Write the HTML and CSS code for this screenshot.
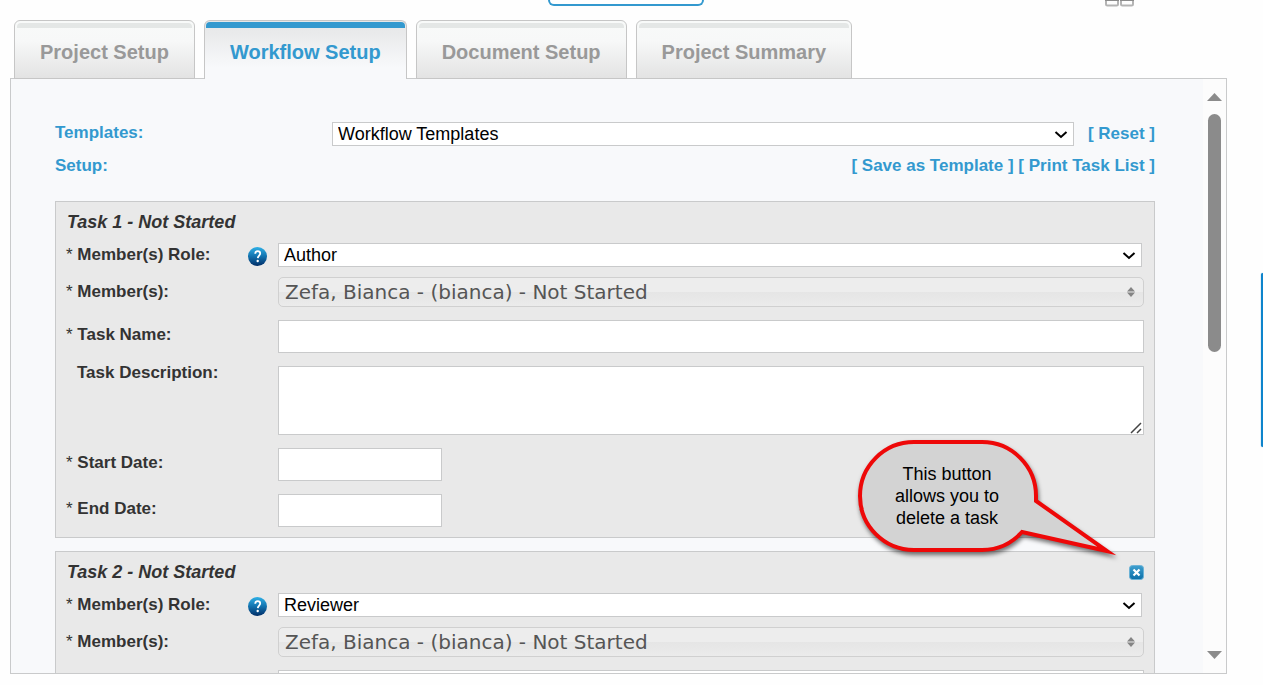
FILE: index.html
```html
<!DOCTYPE html>
<html lang="en">
<head>
<meta charset="utf-8">
<title>Workflow Setup</title>
<link rel="stylesheet" href="styles.css">
</head>
<body>
<svg class="defs" aria-hidden="true">
  <defs>
    <linearGradient id="help-fill" x1="0" y1="0" x2="0" y2="1">
      <stop offset="0" stop-color="#2fb0e6"/><stop offset="0.5" stop-color="#1272ae"/><stop offset="1" stop-color="#002c66"/>
    </linearGradient>
    <linearGradient id="close-fill" x1="0" y1="0" x2="0" y2="1">
      <stop offset="0" stop-color="#3fa0cf"/><stop offset="1" stop-color="#0c6fa8"/>
    </linearGradient>
    <symbol id="chevron" viewBox="0 0 14 9"><path d="M1.500 2l5.500 5 5.500-5" fill="none" stroke="#000" stroke-width="2"/></symbol>
    <symbol id="sort" viewBox="0 0 8 10"><path d="M4 0l4 4.400H0zM4 10l4-4.400H0z" fill="#858585"/></symbol>
    <symbol id="help" viewBox="0 0 19 19">
      <circle cx="9.5" cy="9.5" r="9.5" fill="url(#help-fill)"/>
      <path d="M7.2 6.8C7.2 5 8.3 4.1 9.7 4.1s2.5 1 2.5 2.4c0 1.9-2.3 2.2-2.4 4.6" fill="none" stroke="#fff" stroke-width="1.8"/>
      <circle cx="9.7" cy="14" r="1.2" fill="#fff"/>
    </symbol>
  </defs>
</svg>
<header class="topbar">
  <button class="topbar-button" type="button" aria-label="Open"></button>
  <svg class="topbar-grid" width="29" height="7" viewBox="0 0 29 7" aria-hidden="true">
    <path d="M1 0v4q0 1.500 1.500 1.500h9q1.500 0 1.500-1.500V0M16 0v4q0 1.500 1.500 1.500h9q1.500 0 1.500-1.500V0" fill="none" stroke="#b4b4b4" stroke-width="2"/>
    <path d="M0 0h14v1H0zM15 0h14v1H15z" fill="#8c8c8c"/>
  </svg>
</header>
<nav class="tabs">
  <a class="tab" href="#project">Project Setup</a>
  <a class="tab tab-active" href="#workflow">Workflow Setup</a>
  <a class="tab" href="#document">Document Setup</a>
  <a class="tab" href="#summary">Project Summary</a>
</nav>
<main class="panel">
  <div class="content">
    <div class="template-row">
      <label class="heading" for="templates">Templates:</label>
      <span class="select">
        <select id="templates"><option>Workflow Templates</option></select>
        <svg class="chevron" width="14" height="9" aria-hidden="true"><use href="#chevron"/></svg>
      </span>
      <a class="link" href="#reset">[ Reset ]</a>
    </div>
    <div class="setup-row">
      <span class="heading">Setup:</span>
      <span><a class="link" href="#save">[ Save as Template ]</a> <a class="link" href="#print">[ Print Task List ]</a></span>
    </div>

    <section class="task">
      <div class="task-head"><h2>Task 1 - Not Started</h2></div>
      <div class="field">
        <div class="label-cell">
          <label for="role1"><span class="star">*</span> Member(s) Role:</label>
          <svg class="help" width="19" height="19" role="img" aria-label="Help"><use href="#help"/></svg>
        </div>
        <span class="select select-role">
          <select id="role1"><option>Author</option></select>
          <svg class="chevron" width="14" height="9" aria-hidden="true"><use href="#chevron"/></svg>
        </span>
      </div>
      <div class="field">
        <label for="members1"><span class="star">*</span> Member(s):</label>
        <button class="members" id="members1" type="button">Zefa, Bianca - (bianca) - Not Started <svg width="8" height="10" aria-hidden="true"><use href="#sort"/></svg></button>
      </div>
      <div class="field field-spaced">
        <label for="name1"><span class="star">*</span> Task Name:</label>
        <input class="text" id="name1" type="text">
      </div>
      <div class="field field-spaced field-top">
        <label class="optional" for="desc1">Task Description:</label>
        <span class="area-wrap">
          <textarea class="text area" id="desc1"></textarea>
          <svg class="grip" width="12" height="12" viewBox="0 0 12 12" aria-hidden="true"><path d="M1 11L11 1M7 11l4-4" fill="none" stroke="#444" stroke-width="1.500"/></svg>
        </span>
      </div>
      <div class="field field-spaced">
        <label for="start1"><span class="star">*</span> Start Date:</label>
        <input class="text date" id="start1" type="text">
      </div>
      <div class="field field-spaced">
        <label for="end1"><span class="star">*</span> End Date:</label>
        <input class="text date" id="end1" type="text">
      </div>
    </section>

    <section class="task">
      <div class="task-head">
        <h2>Task 2 - Not Started</h2>
        <button class="delete" type="button" aria-label="Delete task">
          <svg width="15" height="15" viewBox="0 0 15 15"><rect x="0.500" y="0.500" width="14" height="14" rx="3" fill="url(#close-fill)" stroke="#6bb2d6"/><path d="M4.500 4.500l6 6M10.500 4.500l-6 6" stroke="#fff" stroke-width="2.200"/></svg>
        </button>
      </div>
      <div class="field">
        <div class="label-cell">
          <label for="role2"><span class="star">*</span> Member(s) Role:</label>
          <svg class="help" width="19" height="19" role="img" aria-label="Help"><use href="#help"/></svg>
        </div>
        <span class="select select-role">
          <select id="role2"><option>Reviewer</option></select>
          <svg class="chevron" width="14" height="9" aria-hidden="true"><use href="#chevron"/></svg>
        </span>
      </div>
      <div class="field">
        <label for="members2"><span class="star">*</span> Member(s):</label>
        <button class="members" id="members2" type="button">Zefa, Bianca - (bianca) - Not Started <svg width="8" height="10" aria-hidden="true"><use href="#sort"/></svg></button>
      </div>
      <div class="field field-spaced">
        <span></span>
        <input class="text" type="text" aria-label="Task Name">
      </div>
      <aside class="callout">
        <svg class="callout-shape" width="275" height="133" viewBox="850 432 275 133" aria-hidden="true">
          <path d="M914 442H982A54 54 0 0 1 1036 496V501L1107 551 1022 532A54 54 0 0 1 982 550H914A54 54 0 0 1 914 442Z" fill="#d3d3d3" stroke="#ee0808" stroke-width="4" stroke-miterlimit="10"/>
        </svg>
        <p>This button<br>allows you to<br>delete a task</p>
      </aside>
    </section>
  </div>
  <div class="scrollbar" aria-hidden="true">
    <svg width="15" height="8" viewBox="0 0 15 8"><path d="M7.500 0L15 8H0z" fill="#8b8b8b"/></svg>
    <div class="track"><div class="thumb"></div></div>
    <svg width="15" height="8" viewBox="0 0 15 8"><path d="M7.500 8L15 0H0z" fill="#8b8b8b"/></svg>
  </div>
</main>
<div class="side-tab"></div>
</body>
</html>
```
FILE: styles.css
```css
* { box-sizing: border-box; }

body {
  margin: 0;
  height: 100vh;
  display: flex;
  flex-direction: column;
  overflow: hidden;
  background: #fefefe;
  color: #333;
  font: 18px/22px "Liberation Sans", Arial, sans-serif;
}

.defs { position: absolute; width: 0; height: 0; }

.topbar {
  flex: none;
  display: flex;
  justify-content: space-between;
  align-items: flex-start;
  height: 20px;
  padding: 0 129px 0 548px;
}
.topbar-button {
  width: 156px;
  height: 6px;
  padding: 0;
  border: 2px solid #3399cf;
  border-top: 0;
  border-radius: 0 0 6px 6px;
  background: #fff;
}

.tabs {
  flex: none;
  display: flex;
  gap: 9px;
  padding-left: 14px;
  margin-bottom: -1px;
  position: relative;
  z-index: 1;
}
.tab {
  position: relative;
  height: 59px;
  padding: 1px 25px 0;
  border: 1px solid #c6c6c6;
  border-radius: 6px 6px 0 0;
  background: linear-gradient(#f8faf9, #f7f8f8 35%, #e3e3e3);
  color: #999;
  font-size: 20px;
  font-weight: bold;
  line-height: 60px;
  text-decoration: none;
}
.tab::before {
  content: "";
  position: absolute;
  inset: 2px 2px auto;
  height: 5px;
  border-radius: 4px 4px 0 0;
  background: #e4e7e6;
}
.tab-active {
  border-bottom: 0;
  background: linear-gradient(#e6e7e8, #e9eaeb 20%, #f8f9fb 80%);
  color: #3399cf;
}
.tab-active::before {
  inset: 1px 1px auto;
  height: 6px;
  background: #3399cf;
}

.panel {
  flex: 1;
  min-height: 0;
  display: flex;
  margin: 0 36px 11px 10px;
  border: 1px solid #c9cacb;
  background: #f8f9fb;
}
.content {
  flex: 1;
  min-width: 0;
  overflow: hidden;
  padding: 43px 48px 0 44px;
}

.heading, .link { color: #3399cf; font-size: 17px; font-weight: bold; }
.link { text-decoration: none; }
.template-row {
  display: grid;
  grid-template-columns: 277px 1fr auto;
  align-items: center;
}
.template-row .heading { padding-bottom: 2px; }
.template-row .link { padding-left: 14px; }
.setup-row {
  display: flex;
  justify-content: space-between;
  margin: 9px 0 24px;
  font-size: 17px;
}

.select { position: relative; display: block; }
.select select {
  display: block;
  width: 100%;
  height: 24px;
  padding: 0 24px 0 5px;
  appearance: none;
  border: 1px solid #c9cacb;
  border-radius: 0;
  background: #fff;
  color: #000;
  font: inherit;
}
.select-role { margin-right: 2px; }
.chevron {
  position: absolute;
  right: 6px;
  top: 8px;
  pointer-events: none;
}

.task {
  position: relative;
  margin-bottom: 13px;
  padding: 9px 10px 10px;
  border: 1px solid #c9cacb;
  background: #e9e9e9;
}
.task-head { display: flex; justify-content: space-between; align-items: center; }
.task-head h2 {
  margin: 0;
  padding-left: 1px;
  font-size: 18px;
  line-height: 22px;
  font-style: italic;
}
.delete { padding: 0; border: 0; background: none; line-height: 0; }

.field {
  display: grid;
  grid-template-columns: 212px 1fr;
  align-items: center;
  margin-top: 10px;
}
.field label { font-size: 17px; font-weight: bold; }
.field-spaced { margin-top: 13px; }
.field-spaced label { padding-bottom: 4px; }
.field-top { align-items: start; }
.field .star { font-weight: normal; }
.label-cell { display: flex; justify-content: space-between; align-items: flex-start; padding-right: 11px; }
.help { margin-top: 3px; }
.field .optional { padding-left: 11px; line-height: 14px; }

.members {
  display: flex;
  justify-content: space-between;
  align-items: center;
  width: 100%;
  height: 30px;
  padding: 0 8px 0 6px;
  border: 1px solid #d0d0d0;
  border-radius: 5px;
  background: linear-gradient(#ededed 50%, #e5e5e5 50%, #ebebeb);
  color: #555;
  font: 20px/24px "DejaVu Sans", Verdana, sans-serif;
}
.text {
  display: block;
  width: 100%;
  height: 33px;
  padding: 4px;
  border: 1px solid #c9cacb;
  border-radius: 0;
  background: #fff;
  font: inherit;
}
.area-wrap { position: relative; }
.area { height: 69px; resize: none; }
.grip { position: absolute; right: 2px; bottom: 1px; pointer-events: none; }
.date { width: 164px; }

/* Sits over the tasks, its tip pointing at the delete button */
.callout {
  position: absolute;
  right: 29px;
  top: -120px;
  width: 275px;
  height: 133px;
}
.callout-shape { position: absolute; inset: 0; filter: drop-shadow(1px 3px 2px #0008); }
.callout p {
  position: relative;
  width: 194px;
  margin: 0;
  padding-top: 31px;
  color: #000;
  text-align: center;
}

.scrollbar {
  flex: none;
  display: flex;
  flex-direction: column;
  align-items: center;
  width: 23px;
  padding: 14px 0;
  background: #fcfcfc;
}
.track { flex: 1; padding: 13px 0; }
.thumb { width: 13px; height: 45%; min-height: 238px; border-radius: 7px; background: #8b8b8b; }

.side-tab {
  position: absolute;
  right: 0;
  top: 273px;
  width: 2px;
  height: 174px;
  border-radius: 2px 0 0 2px;
  background: #0e84cc;
  box-shadow: 0 0 1px #0e84cc;
}
```
